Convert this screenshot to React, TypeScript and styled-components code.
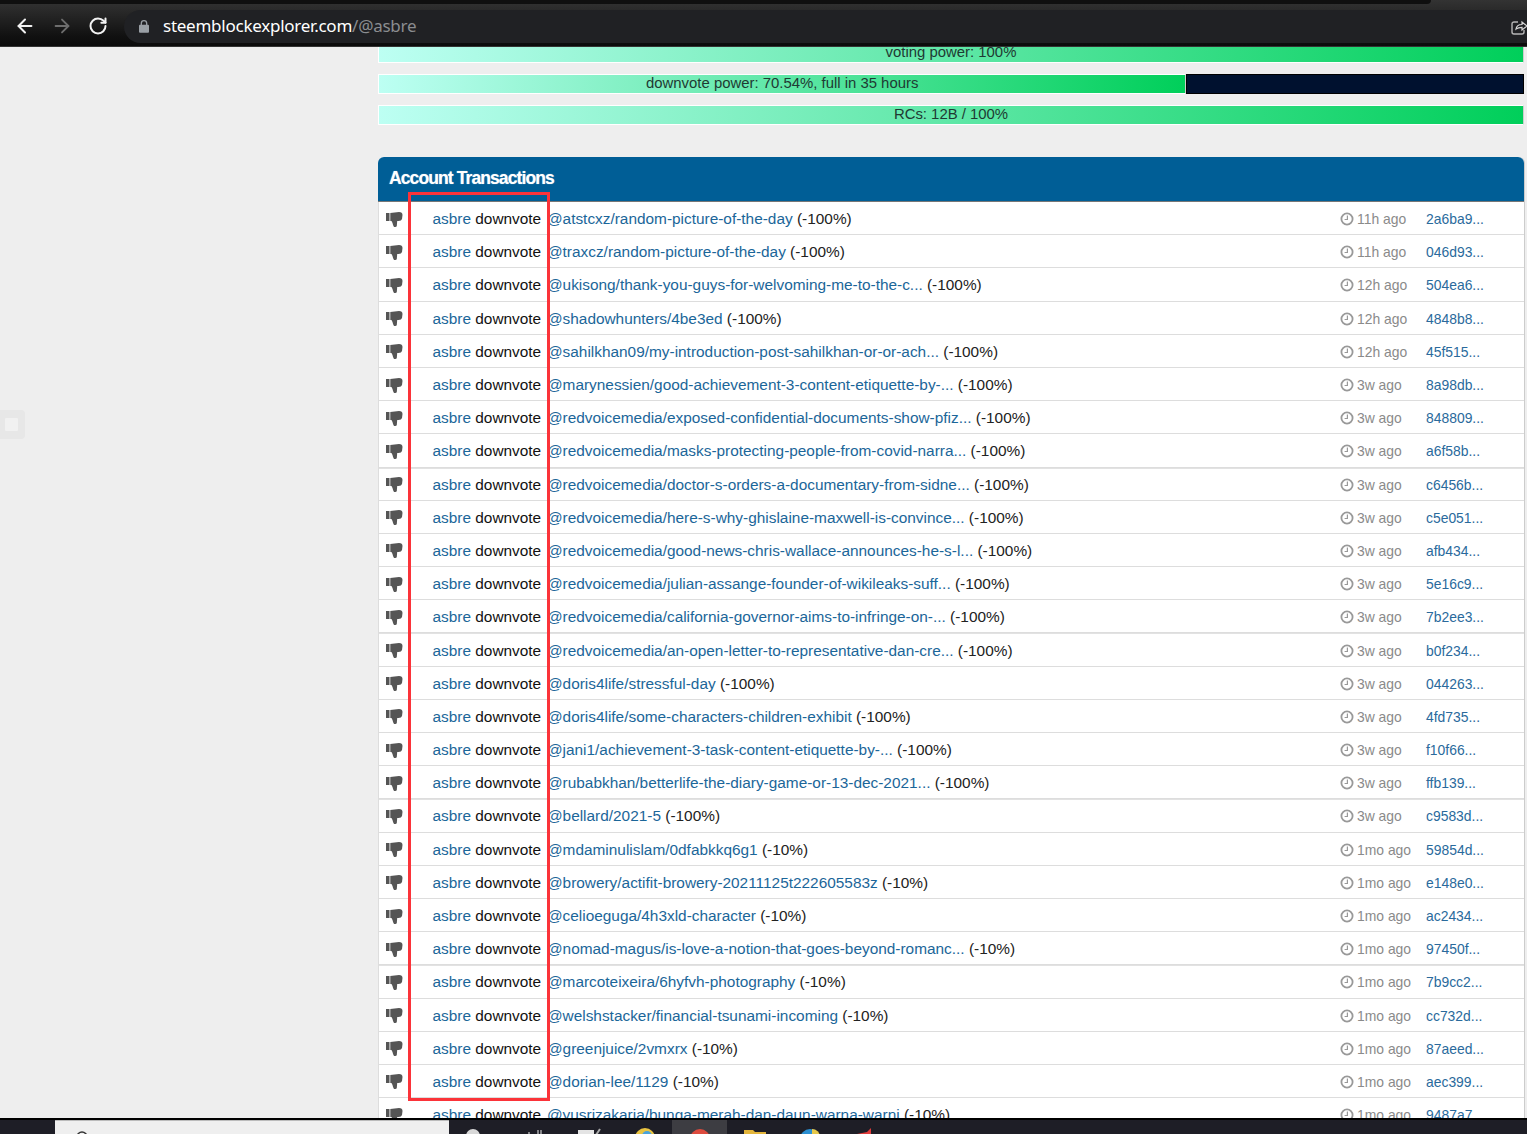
import React from "react";
import styled, { createGlobalStyle } from "styled-components";
import { ArrowLeft, ArrowRight, RotateCw } from "lucide-react";

const Global = createGlobalStyle`
  html, body { margin: 0; padding: 0; background: #eee; }
  body { font-family: "Liberation Sans", Arial, sans-serif; overflow: hidden; }
  a { text-decoration: none; }
`;

const Page = styled.div`
  width: 1527px; height: 1134px; display: flex; flex-direction: column; overflow: hidden;
  position: relative; background: #eee;
`;

const Browser = styled.header`
  height: 47px; flex: none; position: relative; z-index: 2;
  background: linear-gradient(#333 0, #2a2a2a 10px, #111 36px, #0b0b0b 100%);
  border-bottom: 1px solid #333; box-sizing: border-box;
  display: flex; align-items: flex-start; padding-top: 10px; overflow: hidden;
`;
const TabStrip = styled.div`
  position: absolute; left: 0; top: 0; width: 1431px; height: 4px; background: #0f0f0f;
  border-bottom-right-radius: 4px;
`;
const NavButtons = styled.div`
  width: 124px; flex: none; height: 32px; display: flex; align-items: center;
  padding-left: 14px; gap: 15px; box-sizing: border-box;
`;
const NavIcon = styled.span<{ $dim?: boolean }>`
  display: flex; color: ${(p) => (p.$dim ? "#6e6e6e" : "#f2f2f2")};
`;
const Omnibox = styled.div`
  flex: 1; height: 33px; background: #202124; border-radius: 17px 0 0 17px;
  display: flex; align-items: center; position: relative; padding-left: 15px; padding-bottom: 3px; box-sizing: border-box;
`;
const Url = styled.div`
  margin-left: 14px; font: 17px "Noto Sans", "Open Sans", sans-serif; letter-spacing: -0.25px; color: #fff;
  span { color: #8b8d90; }
`;
const LockIcon = styled.svg`
  margin-top: 3px;
`;
const ShareIcon = styled.svg`
  position: absolute; right: 0; top: 9px;
`;

const Main = styled.main`
  flex: 1; min-height: 0; overflow: hidden; position: relative;
  padding: 0 2px 0 378px;
`;
const SideTab = styled.div`
  position: absolute; left: 0; top: 363px; width: 25px; height: 29px; background: #e7e7e7;
  border-radius: 0 4px 4px 0; display: flex; align-items: center; padding-left: 5px; box-sizing: border-box;
  &::after { content: ""; width: 13px; height: 13px; background: #f1f1f1; border-radius: 1px; }
`;

const Bar = styled.div<{ $clip?: boolean }>`
  height: 20px; display: flex; box-sizing: border-box; margin: ${(p) => (p.$clip ? "-4px" : "11px")} 1px 0 0;
  background: #eee;
`;
const Fill = styled.div`
  height: 100%; box-sizing: border-box; border: 1px solid #fff; border-right-color: #ccc;
  background: linear-gradient(92deg, #bdfff3 0%, #00cf5a 100%);
  text-align: center; font-size: 14.9px; line-height: 16px; color: #1f3a33;
  white-space: nowrap; overflow: hidden;
`;
const Empty = styled.div`
  flex: 1; background: #00112f; border: 1px solid #000; box-sizing: border-box;
`;

const Panel = styled.section`
  margin-top: 32px; background: #fff; border-radius: 6px 6px 0 0;
  border-right: 1px solid #ccc;
`;
const PanelHead = styled.h3`
  margin: 0; height: 45px; background: #005e96; border-radius: 6px 6px 0 0;
  border-bottom: 1px solid #777; box-sizing: border-box;
  color: #fff; font-size: 17.5px; font-weight: 700; line-height: 43px; padding-left: 11px; letter-spacing: -0.9px;
  text-shadow: 0 0 1px rgba(255, 255, 255, 0.6);
`;
const Row = styled.div<{ $thick?: boolean }>`
  height: 33.2px; box-sizing: border-box; display: flex; align-items: center; padding-top: 2px;
  border-left: 1px solid #ddd;
  border-bottom: 1px solid #ddd;
  box-shadow: ${(p) => (p.$thick ? "0 1px 0 #e2e2e2" : "none")};
  font-size: 15.4px; color: #222; white-space: nowrap;
`;
const VoteIcon = styled.svg`
  flex: none; margin: 0 29.500px 0 7px; color: #555;
`;
const Body = styled.div`flex: 1; min-width: 0;`;
const Actor = styled.a`color: #1b6699;`;
const Verb = styled.span`color: #111; margin-right: 1.500px;`;
const Time = styled.div`
  width: 86px; flex: none; color: #8a8a8a; font-size: 13.9px; display: flex; align-items: center; gap: 3px;
`;
const Hash = styled.a`
  width: 98px; flex: none; color: #2a6a9c; font-size: 13.9px;
`;

const Highlight = styled.div`
  position: absolute; left: 408px; top: 145px; width: 142px; height: 909px;
  border: 3px solid #fb3339; box-sizing: border-box; pointer-events: none;
`;

const Taskbar = styled.footer`
  height: 16px; flex: none; background: #1e1e26; border-top: 2px solid #000; box-sizing: border-box;
  display: flex; position: relative; z-index: 2; overflow: hidden;
`;
const SearchBox = styled.div`
  margin-left: 55px; width: 394px; background: #efefef; border-top: 1px solid #bbb; box-sizing: border-box;
  padding: 9px 0 0 20px;
`;
const Tray = styled.div`display: flex; align-items: flex-start; padding-left: 3px;`;
const TraySlot = styled.div<{ $on?: boolean }>`
  width: 55px; height: 14px; display: flex; justify-content: center; padding-top: 7px; box-sizing: border-box;
  background: ${(p) => (p.$on ? "#3d3d42" : "transparent")};
`;

const Clock = () => (
  <svg width="14" height="14" viewBox="0 0 14 14">
    <circle cx="7" cy="7" r="5.6" fill="none" stroke="#999" strokeWidth="1.8" />
    <path d="M7.4 3.6V7.5H4.6" fill="none" stroke="#999" strokeWidth="1.2" />
  </svg>
);

const ThumbDown = () => (
  <VoteIcon width="17" height="15" viewBox="0 0 17 15">
    <rect x="0" y="1" width="3.5" height="8" fill="currentColor" />
    <path d="M4.3 1L13 0Q16.500 0 16.500 3L16 7Q15.500 9 12.500 9L11.200 9L10.800 14Q10.500 15 9.300 15L8 15Q6.800 13 6.500 11L5.500 9L4.300 9Z" fill="currentColor" />
  </VoteIcon>
);

type Tx = [string, string, string, string];
const rows: Tx[] = [
  ["@atstcxz/random-picture-of-the-day", "-100%", "11h ago", "2a6ba9..."],
  ["@traxcz/random-picture-of-the-day", "-100%", "11h ago", "046d93..."],
  ["@ukisong/thank-you-guys-for-welvoming-me-to-the-c...", "-100%", "12h ago", "504ea6..."],
  ["@shadowhunters/4be3ed", "-100%", "12h ago", "4848b8..."],
  ["@sahilkhan09/my-introduction-post-sahilkhan-or-or-ach...", "-100%", "12h ago", "45f515..."],
  ["@marynessien/good-achievement-3-content-etiquette-by-...", "-100%", "3w ago", "8a98db..."],
  ["@redvoicemedia/exposed-confidential-documents-show-pfiz...", "-100%", "3w ago", "848809..."],
  ["@redvoicemedia/masks-protecting-people-from-covid-narra...", "-100%", "3w ago", "a6f58b..."],
  ["@redvoicemedia/doctor-s-orders-a-documentary-from-sidne...", "-100%", "3w ago", "c6456b..."],
  ["@redvoicemedia/here-s-why-ghislaine-maxwell-is-convince...", "-100%", "3w ago", "c5e051..."],
  ["@redvoicemedia/good-news-chris-wallace-announces-he-s-l...", "-100%", "3w ago", "afb434..."],
  ["@redvoicemedia/julian-assange-founder-of-wikileaks-suff...", "-100%", "3w ago", "5e16c9..."],
  ["@redvoicemedia/california-governor-aims-to-infringe-on-...", "-100%", "3w ago", "7b2ee3..."],
  ["@redvoicemedia/an-open-letter-to-representative-dan-cre...", "-100%", "3w ago", "b0f234..."],
  ["@doris4life/stressful-day", "-100%", "3w ago", "044263..."],
  ["@doris4life/some-characters-children-exhibit", "-100%", "3w ago", "4fd735..."],
  ["@jani1/achievement-3-task-content-etiquette-by-...", "-100%", "3w ago", "f10f66..."],
  ["@rubabkhan/betterlife-the-diary-game-or-13-dec-2021...", "-100%", "3w ago", "ffb139..."],
  ["@bellard/2021-5", "-100%", "3w ago", "c9583d..."],
  ["@mdaminulislam/0dfabkkq6g1", "-10%", "1mo ago", "59854d..."],
  ["@browery/actifit-browery-20211125t222605583z", "-10%", "1mo ago", "e148e0..."],
  ["@celioeguga/4h3xld-character", "-10%", "1mo ago", "ac2434..."],
  ["@nomad-magus/is-love-a-notion-that-goes-beyond-romanc...", "-10%", "1mo ago", "97450f..."],
  ["@marcoteixeira/6hyfvh-photography", "-10%", "1mo ago", "7b9cc2..."],
  ["@welshstacker/financial-tsunami-incoming", "-10%", "1mo ago", "cc732d..."],
  ["@greenjuice/2vmxrx", "-10%", "1mo ago", "87aeed..."],
  ["@dorian-lee/1129", "-10%", "1mo ago", "aec399..."],
  ["@yusrizakaria/bunga-merah-dan-daun-warna-warni", "-10%", "1mo ago", "9487a7"],
];
const thickAfter = new Set([7, 12, 17, 22]);

export default function App() {
  return (
    <Page>
      <Global />
      <Browser>
        <TabStrip />
        <NavButtons>
          <NavIcon><ArrowLeft size={22} strokeWidth={2.2} /></NavIcon>
          <NavIcon $dim><ArrowRight size={22} strokeWidth={2} /></NavIcon>
          <NavIcon><RotateCw size={20} strokeWidth={2.4} /></NavIcon>
        </NavButtons>
        <Omnibox>
          <LockIcon width="10" height="13" viewBox="0 0 10 13">
            <path d="M2.3 5V3.4a2.7 2.7 0 0 1 5.4 0V5" fill="none" stroke="#9aa0a6" strokeWidth="1.3" />
            <rect x="0" y="4.8" width="10" height="8" rx="1" fill="#9aa0a6" />
          </LockIcon>
          <Url>steemblockexplorer.com<span>/@asbre</span></Url>
          <ShareIcon width="16" height="17" viewBox="0 0 16 17">
            <path d="M7 3H3a2 2 0 0 0-2 2v8a2 2 0 0 0 2 2h8a2 2 0 0 0 2-2v-2" fill="none" stroke="#b5b5b5" strokeWidth="1.4" />
            <path d="M5 10c.5-3 3-4.500 6-4.500V3l5 4-5 4V8.300C8.500 8.300 6.500 8.800 5 10z" fill="none" stroke="#d5d5d5" strokeWidth="1.2" />
          </ShareIcon>
        </Omnibox>
      </Browser>
      <Main>
        <SideTab />
        <Bar $clip><Fill style={{ width: "100%" }}>voting power: 100%</Fill></Bar>
        <Bar><Fill style={{ width: "70.54%" }}>downvote power: 70.54%, full in 35 hours</Fill><Empty /></Bar>
        <Bar><Fill style={{ width: "100%" }}>RCs: 12B / 100%</Fill></Bar>
        <Panel>
          <PanelHead>Account Transactions</PanelHead>
          {rows.map((r, i) => (
            <Row key={r[3]} $thick={thickAfter.has(i)}>
              <ThumbDown />
              <Body>
                <Actor>asbre</Actor> <Verb>downvote</Verb> <Actor>{r[0]}</Actor> ({r[1]})
              </Body>
              <Time><Clock />{r[2]}</Time>
              <Hash>{r[3]}</Hash>
            </Row>
          ))}
        </Panel>
        <Highlight />
      </Main>
      <Taskbar>
        <SearchBox>
          <svg width="14" height="14" viewBox="0 0 14 14"><circle cx="7" cy="7" r="5" fill="none" stroke="#333" strokeWidth="1.5" /></svg>
        </SearchBox>
        <Tray>
          <TraySlot>
            <svg width="30" height="14" viewBox="0 0 30 14"><circle cx="8" cy="9" r="7" fill="#d8d8d8" /></svg>
          </TraySlot>
          <TraySlot>
            <svg width="20" height="14" viewBox="0 0 20 14"><path d="M4 5v9M13 3v9M16 3v9" stroke="#eee" strokeWidth="1" /></svg>
          </TraySlot>
          <TraySlot>
            <svg width="26" height="14" viewBox="0 0 26 14"><rect x="1" y="3" width="16" height="11" fill="#e4e4e4" /><path d="M19 8l4-6" stroke="#aaa" strokeWidth="2" /></svg>
          </TraySlot>
          <TraySlot>
            <svg width="24" height="14" viewBox="0 0 24 14"><circle cx="12" cy="11" r="10" fill="#e9c341" /><circle cx="14" cy="9" r="5" fill="#4aa3dc" /></svg>
          </TraySlot>
          <TraySlot $on>
            <svg width="24" height="14" viewBox="0 0 24 14"><circle cx="12" cy="12" r="10" fill="#dd4b3e" /></svg>
          </TraySlot>
          <TraySlot>
            <svg width="26" height="14" viewBox="0 0 26 14"><path d="M2 3h9l2 2h11v9H2z" fill="#e3b53b" /></svg>
          </TraySlot>
          <TraySlot>
            <svg width="24" height="14" viewBox="0 0 24 14"><circle cx="12" cy="12" r="10" fill="#2b8fd1" /><path d="M14 2a8 8 0 0 1 8 8h-8z" fill="#e6c84a" /></svg>
          </TraySlot>
          <TraySlot>
            <svg width="24" height="14" viewBox="0 0 24 14"><path d="M4 14V7l10-2 4-4v13z" fill="#e23b3b" /></svg>
          </TraySlot>
        </Tray>
      </Taskbar>
    </Page>
  );
}
